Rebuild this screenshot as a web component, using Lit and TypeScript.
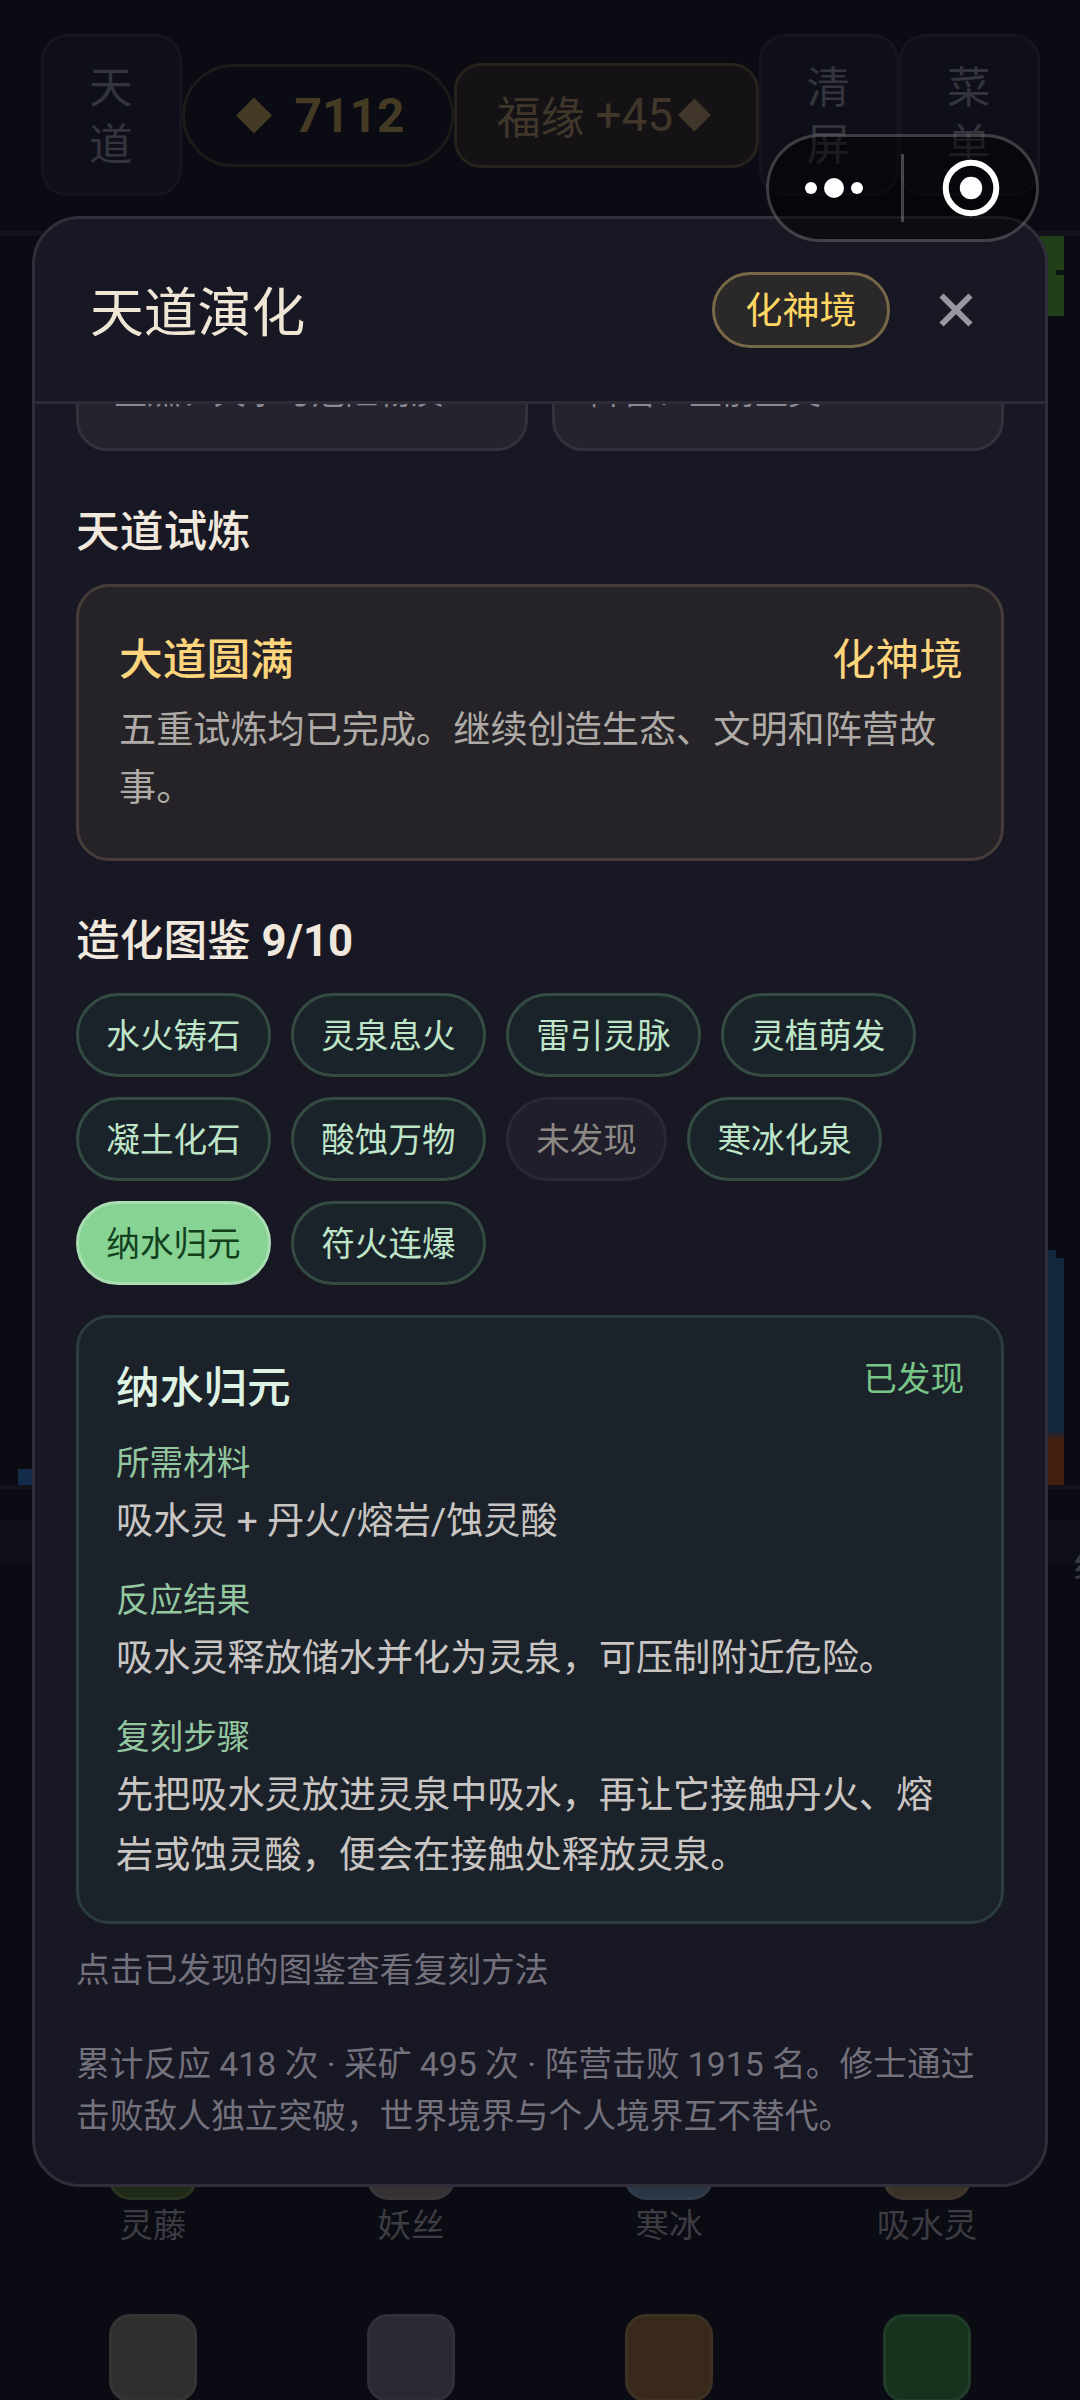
import { LitElement, html, css } from "lit";
import { customElement, property } from "lit/decorators.js";
import { classMap } from "lit/directives/class-map.js";

interface Recipe {
  name: string;
  state: "found" | "unknown" | "active";
}

interface Material {
  name: string;
  fill: string;
  edge: string;
}

const RECIPES: Recipe[] = [
  { name: "水火铸石", state: "found" },
  { name: "灵泉息火", state: "found" },
  { name: "雷引灵脉", state: "found" },
  { name: "灵植萌发", state: "found" },
  { name: "凝土化石", state: "found" },
  { name: "酸蚀万物", state: "found" },
  { name: "未发现", state: "unknown" },
  { name: "寒冰化泉", state: "found" },
  { name: "纳水归元", state: "active" },
  { name: "符火连爆", state: "found" },
];

const MATERIALS: Material[] = [
  { name: "灵藤", fill: "#1f2a17", edge: "#2a3421" },
  { name: "妖丝", fill: "#353135", edge: "#39363a" },
  { name: "寒冰", fill: "#2a3644", edge: "#303b49" },
  { name: "吸水灵", fill: "#3b3227", edge: "#40382e" },
  { name: "", fill: "#2f2f2f", edge: "#353536" },
  { name: "", fill: "#2a2a35", edge: "#30303a" },
  { name: "", fill: "#38291a", edge: "#3d3123" },
  { name: "", fill: "#17331d", edge: "#213c28" },
];

const DETAIL = [
  { label: "所需材料", text: "吸水灵 + 丹火/熔岩/蚀灵酸" },
  { label: "反应结果", text: "吸水灵释放储水并化为灵泉，可压制附近危险。" },
  { label: "复刻步骤", text: "先把吸水灵放进灵泉中吸水，再让它接触丹火、熔岩或蚀灵酸，便会在接触处释放灵泉。" },
];

/* Dimmed game screen behind the dialog. */
@customElement("game-backdrop")
class GameBackdrop extends LitElement {
  static styles = css`
    * { box-sizing: border-box; }
    :host {
      display: flex;
      flex-direction: column;
      height: 2400px;
      background: #0a0b13;
    }
    .bar {
      display: flex;
      align-items: center;
      flex: none;
      height: 236px;
      padding: 0 40px 1px 41px;
      border-bottom: 5px solid #11121a;
    }
    .key {
      width: 140.5px;
      height: 162px;
      padding: 24px 45px 0;
      border: 3px solid #14151e;
      border-radius: 26px;
      background: #0e0f18;
      color: #33343c;
      font-size: 43.4px;
      line-height: 56.5px;
      word-break: break-all;
    }
    .coins {
      display: flex;
      align-items: center;
      justify-content: center;
      gap: 22px;
      width: 272px;
      height: 103px;
      padding-left: 6px;
      border: 3px solid #1d1a1a;
      border-radius: 52px;
      color: #453a24;
      font-size: 48px;
      font-weight: 700;
    }
    .gem { width: 36px; height: 37px; fill: currentColor; flex: none; }
    .luck {
      display: flex;
      align-items: center;
      justify-content: center;
      width: 305px;
      height: 105px;
      border: 3px solid #27221c;
      border-radius: 27px;
      background: #151216;
      color: #40372a;
      font-size: 43.8px;
      white-space: pre;
    }
    .plus { font-size: 46px; }
    .luck .gem { width: 33px; height: 34px; margin: 0 4px 0 5px; }
    .stage {
      position: relative;
      flex: none;
      height: 1249px;
      overflow: hidden;
    }
    .cell { position: absolute; }
    .grass { left: 1040px; top: 0; width: 24px; height: 80px; background: #223f18; }
    .notch { left: 1056px; top: 34px; width: 8px; height: 5px; background: #0b1410; }
    .water-a { left: 1040px; top: 1014px; width: 16px; height: 190px; background: #12263e; }
    .water-b { left: 1056px; top: 1022px; width: 8px; height: 182px; background: #12263e; }
    .lava { left: 1040px; top: 1196px; width: 24px; height: 53px; background: linear-gradient(#1d2233, #42200f 8px); }
    .pool { left: 18px; top: 1233px; width: 20px; height: 16px; background: #142b49; }
    .tray { flex: 1; border-top: 4px solid #11121a; display: flex; flex-direction: column; }
    .tabs {
      height: 45px;
      margin-top: 32px;
      padding-left: 1074px;
      background: #0d0e16;
      color: #3c3c42;
      font-size: 34px;
      line-height: 90px;
      white-space: nowrap;
      width: 1080px;
      overflow-x: clip;
    }
    .grid {
      display: grid;
      grid-template-columns: repeat(4, 258px);
      grid-auto-rows: 202px;
      margin: 546px 24px 0;
    }
    .item { display: flex; flex-direction: column; align-items: center; gap: 4px; }
    .swatch { width: 88px; height: 88px; border: 3px solid; border-radius: 21px; }
    .name { color: #3c3c42; font-size: 33.5px; line-height: 44px; }
  `;

  private gem() {
    return html`<svg class="gem" viewBox="0 0 36 36"><path d="M18 0 36 18 18 36 0 18Z"></path></svg>`;
  }

  render() {
    return html`
      <div class="bar">
        <div class="key">天道</div>
        <div class="coins">${this.gem()}<span>7112</span></div>
        <div class="luck">福缘 <span class="plus">+45</span>${this.gem()}</div>
        <div class="key">清屏</div>
        <div class="key">菜单</div>
      </div>
      <div class="stage">
        <div class="cell grass"></div>
        <div class="cell notch"></div>
        <div class="cell water-a"></div>
        <div class="cell water-b"></div>
        <div class="cell lava"></div>
        <div class="cell pool"></div>
      </div>
      <div class="tray">
        <div class="tabs">红</div>
        <div class="grid">
          ${MATERIALS.map(
            (m) => html`<div class="item">
              <div class="swatch" style="background:${m.fill};border-color:${m.edge}"></div>
              <div class="name">${m.name}</div>
            </div>`
          )}
        </div>
      </div>
    `;
  }
}

@customElement("recipe-chip")
class RecipeChip extends LitElement {
  @property() name = "";
  @property() state = "found";

  static styles = css`
    :host { display: block; }
    .chip {
      box-sizing: border-box;
      height: 84px;
      padding: 1px 27.3px 0;
      border: 3px solid #334b42;
      border-radius: 42px;
      background: #1b232a;
      color: #bfe5c9;
      font-size: 33.6px;
      line-height: 79px;
      white-space: nowrap;
    }
    .unknown { background: #201e2a; border-color: #2a2835; color: #8d8985; }
    .active { background: #86d394; border-color: #a9deb3; color: #12401d; }
  `;

  render() {
    const cls = { chip: true, unknown: this.state === "unknown", active: this.state === "active" };
    return html`<div class=${classMap(cls)}>${this.name}</div>`;
  }
}

@customElement("app-root")
class AppRoot extends LitElement {
  static styles = css`
    * { box-sizing: border-box; }
    :host {
      display: block;
      position: relative;
      width: 1080px;
      height: 2400px;
      overflow: hidden;
      background: #0a0b13;
      font-family: Roboto, "Noto Sans CJK SC", sans-serif;
    }
    .dialog {
      position: absolute;
      left: 32px;
      top: 216px;
      width: 1016px;
      height: 1971px;
      display: flex;
      flex-direction: column;
      border: 3px solid #2f2e3a;
      border-radius: 48px;
      background: #181724;
      overflow: hidden;
    }
    .head {
      flex: none;
      display: flex;
      align-items: center;
      height: 185px;
      padding: 0 71px 0 55px;
      border-bottom: 3px solid #2b2a36;
    }
    .title { flex: 1; padding-top: 8px; color: #f0e6d6; font-size: 53.8px; line-height: 70px; }
    .realm {
      width: 178px;
      height: 76px;
      margin-right: 48px;
      border: 3px solid #776847;
      border-radius: 38px;
      background: #2a2828;
      color: #fdd663;
      font-size: 37.2px;
      line-height: 73px;
      text-align: center;
    }
    .close { width: 36px; height: 36px; stroke: #98979f; stroke-width: 6; }
    .body { flex: 1; padding: 0 41px; overflow: hidden; }
    .notes { display: flex; gap: 24px; height: 200px; margin-top: -153px; }
    .note {
      flex: 1;
      display: flex;
      align-items: flex-end;
      padding: 0 35px 30px;
      border: 3px solid #32313d;
      border-radius: 31px;
      background: #24232e;
      color: #8c8a95;
      font-size: 33px;
      line-height: 50px;
    }
    .section { margin: 53px 0 24px; color: #f0e8dc; font-size: 43.7px; font-weight: 500; line-height: 56px; }
    .section.codex { margin: 52px 0 24px; }
    .count { font-weight: 700; }
    .trial {
      height: 277px;
      padding: 43px 38px 0 40px;
      border: 3px solid #463c38;
      border-radius: 33px;
      background: #262328;
    }
    .row { display: flex; justify-content: space-between; align-items: flex-start; }
    .trial-name { color: #fdd57c; font-size: 43.7px; font-weight: 500; line-height: 60px; }
    .trial-realm { color: #fdd57c; font-size: 43.7px; line-height: 60px; }
    .trial-text { margin-top: 12px; color: #aeaba6; font-size: 37.15px; line-height: 57.5px; }
    .chips { display: flex; flex-wrap: wrap; gap: 20px; }
    .detail {
      height: 609px;
      margin-top: 30px;
      padding: 40px 37px 0 37px;
      border: 3px solid #2b3d3d;
      border-radius: 33px;
      background: #1c222a;
    }
    .detail-name { color: #dff3e4; font-size: 43.7px; font-weight: 500; line-height: 60px; }
    .status { color: #79c588; font-size: 33.6px; line-height: 43px; }
    .label { margin-top: 27px; color: #93c79f; font-size: 33.6px; line-height: 44px; }
    .row + .label { margin-top: 24px; }
    .value { margin-top: 6px; color: #c8c5c3; font-size: 37.15px; line-height: 60px; }
    .hint { margin-top: 25px; color: #73717c; font-size: 33.75px; line-height: 44px; }
    .totals { margin-top: 46px; color: #73717c; font-size: 33.75px; line-height: 52px; }
    .capsule {
      position: absolute;
      left: 766px;
      top: 134px;
      width: 273px;
      height: 108px;
      display: flex;
      align-items: center;
      border: 3px solid rgba(255, 255, 255, 0.22);
      border-radius: 54px;
      background: rgba(0, 0, 0, 0.45);
    }
    .dots { width: 132px; height: 40px; fill: #fff; }
    .split { width: 3px; height: 68px; background: rgba(255, 255, 255, 0.25); }
    .target { width: 132px; height: 60px; fill: #fff; }
  `;

  render() {
    return html`
      <game-backdrop></game-backdrop>

      <div class="dialog">
        <div class="head">
          <div class="title">天道演化</div>
          <div class="realm">化神境</div>
          <svg class="close" viewBox="0 0 36 36"><path d="M3.5 3.5 32.5 32.5M32.5 3.5 3.5 32.5"></path></svg>
        </div>
        <div class="body">
          <div class="notes">
            <div class="note">生燃、火水与危险物质</div>
            <div class="note">阵营：生前生灵</div>
          </div>

          <div class="section">天道试炼</div>
          <div class="trial">
            <div class="row">
              <div class="trial-name">大道圆满</div>
              <div class="trial-realm">化神境</div>
            </div>
            <div class="trial-text">五重试炼均已完成。继续创造生态、文明和阵营故事。</div>
          </div>

          <div class="section codex">造化图鉴 <span class="count">9/10</span></div>
          <div class="chips">
            ${RECIPES.map((r) => html`<recipe-chip .name=${r.name} .state=${r.state}></recipe-chip>`)}
          </div>

          <div class="detail">
            <div class="row">
              <div class="detail-name">纳水归元</div>
              <div class="status">已发现</div>
            </div>
            ${DETAIL.map(
              (d) => html`<div class="label">${d.label}</div>
                <div class="value">${d.text}</div>`
            )}
          </div>

          <div class="hint">点击已发现的图鉴查看复刻方法</div>
          <div class="totals">累计反应 418 次 · 采矿 495 次 · 阵营击败 1915 名。修士通过击败敌人独立突破，世界境界与个人境界互不替代。</div>
        </div>
      </div>

      <div class="capsule">
        <svg class="dots" viewBox="0 0 132 40">
          <circle cx="42" cy="20" r="6"></circle>
          <circle cx="65" cy="20" r="10"></circle>
          <circle cx="88" cy="20" r="6"></circle>
        </svg>
        <div class="split"></div>
        <svg class="target" viewBox="0 0 132 60">
          <circle cx="67" cy="30" r="25.3" fill="none" stroke="#fff" stroke-width="6"></circle>
          <circle cx="67" cy="30" r="11.2"></circle>
        </svg>
      </div>
    `;
  }
}
